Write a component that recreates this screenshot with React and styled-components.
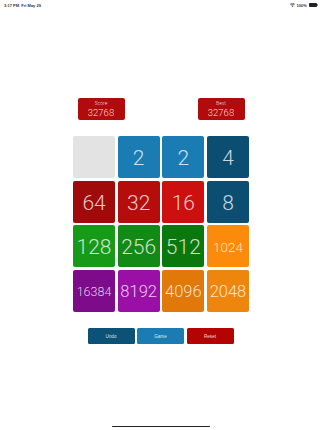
import React from "react";
import styled, { createGlobalStyle } from "styled-components";

const Global = createGlobalStyle`
  html, body { margin: 0; padding: 0; background: #ffffff; }
  body { font-family: "Roboto", "Lato", "Liberation Sans", sans-serif; }
`;

const Screen = styled.div`
  width: 322px;
  height: 430px;
  display: flex;
  flex-direction: column;
  align-items: center;
  overflow: hidden;
`;

const StatusBar = styled.div`
  width: 100%;
  box-sizing: border-box;
  height: 9px;
  margin-top: 0.5px;
  padding: 0 4px 0 4px;
  display: flex;
  align-items: center;
  justify-content: space-between;
  font-family: "Liberation Sans", sans-serif;
  font-size: 4px;
  font-weight: 700;
  color: #333;
`;

const StatusRight = styled.div`
  display: flex;
  align-items: center;
  gap: 2px;
`;

const Battery = styled.div`
  display: flex;
  align-items: center;
  gap: 0.5px;
`;

const BatteryBody = styled.div`
  width: 8px;
  height: 3.5px;
  border-radius: 1px;
  background: #222;
`;

const BatteryNub = styled.div`
  width: 0.7px;
  height: 1.5px;
  background: #888;
`;

const ScoreRow = styled.div`
  margin-top: 88.5px;
  width: 167px;
  display: flex;
  justify-content: space-between;
`;

const ScoreBox = styled.div`
  width: 47px;
  height: 22px;
  border-radius: 2px;
  background: #b10b0b;
  display: flex;
  flex-direction: column;
  align-items: center;
  justify-content: center;
  color: rgba(255, 255, 255, 0.85);
  font-weight: 300;
  line-height: 1;
`;

const ScoreLabel = styled.div`
  font-size: 5px;
  margin-bottom: 1.5px;
`;

const ScoreValue = styled.div`
  font-size: 9.5px;
`;

const Board = styled.div`
  margin-top: 16px;
  width: 176px;
  height: 176px;
  display: grid;
  grid-template-columns: repeat(4, 1fr);
  grid-template-rows: repeat(4, 1fr);
  gap: 2.6px;
`;

const Tile = styled.div`
  border-radius: 2px;
  background: ${(p) => p.$bg};
  display: flex;
  align-items: center;
  justify-content: center;
  color: rgba(255, 255, 255, 0.78);
  font-weight: 300;
  font-size: ${(p) => p.$size}px;
  line-height: 1;
  padding-top: 3px;
  box-sizing: border-box;
`;

const ButtonRow = styled.div`
  margin-top: 16px;
  margin-left: -1px;
  display: flex;
  gap: 2.5px;
`;

const Button = styled.div`
  width: 47px;
  height: 16px;
  border-radius: 1.5px;
  background: ${(p) => p.$bg};
  color: rgba(255, 255, 255, 0.85);
  font-family: "Liberation Sans", sans-serif;
  font-size: 4.6px;
  display: flex;
  align-items: center;
  justify-content: center;
`;

const HomeBar = styled.div`
  margin-top: auto;
  margin-bottom: 3px;
  width: 98px;
  height: 1.5px;
  border-radius: 1px;
  background: #222;
`;

const tiles = [
  { v: null, bg: "#e3e3e3" },
  { v: 2, bg: "#1a7cb3" },
  { v: 2, bg: "#1a7cb3" },
  { v: 4, bg: "#0c4e72" },
  { v: 64, bg: "#a00a0a" },
  { v: 32, bg: "#b50c0c" },
  { v: 16, bg: "#cc0f0f" },
  { v: 8, bg: "#0c4e72" },
  { v: 128, bg: "#169a18" },
  { v: 256, bg: "#138a16" },
  { v: 512, bg: "#0b780d" },
  { v: 1024, bg: "#fd8b0b", size: 13.5 },
  { v: 16384, bg: "#7d0b8a", size: 12.5 },
  { v: 8192, bg: "#9a10a7", size: 16.5 },
  { v: 4096, bg: "#e0780a", size: 16.5 },
  { v: 2048, bg: "#ee860d", size: 16.5 },
];

const Wifi = () => (
  <svg width="5" height="4" viewBox="0 0 10 8">
    <path d="M5 8 L3.3 6 A2.5 2.5 0 0 1 6.7 6 Z" fill="#222" />
    <path d="M1.8 4.3 A4.6 4.6 0 0 1 8.2 4.3" stroke="#222" strokeWidth="1.3" fill="none" />
    <path d="M0.3 2.6 A6.8 6.8 0 0 1 9.7 2.6" stroke="#222" strokeWidth="1.3" fill="none" />
  </svg>
);

export default function App() {
  return (
    <>
      <Global />
      <Screen>
        <StatusBar>
          <span>3:17 PM&nbsp;&nbsp;Fri May 29</span>
          <StatusRight>
            <Wifi />
            <span>100%</span>
            <Battery>
              <BatteryBody />
              <BatteryNub />
            </Battery>
          </StatusRight>
        </StatusBar>
        <ScoreRow>
          <ScoreBox>
            <ScoreLabel>Score</ScoreLabel>
            <ScoreValue>32768</ScoreValue>
          </ScoreBox>
          <ScoreBox>
            <ScoreLabel>Best</ScoreLabel>
            <ScoreValue>32768</ScoreValue>
          </ScoreBox>
        </ScoreRow>
        <Board>
          {tiles.map((t, i) => (
            <Tile key={i} $bg={t.bg} $size={t.size || 21}>
              {t.v}
            </Tile>
          ))}
        </Board>
        <ButtonRow>
          <Button $bg="#0c5176">Undo</Button>
          <Button $bg="#1a7cb3">Game</Button>
          <Button $bg="#b30303">Reset</Button>
        </ButtonRow>
        <HomeBar />
      </Screen>
    </>
  );
}
